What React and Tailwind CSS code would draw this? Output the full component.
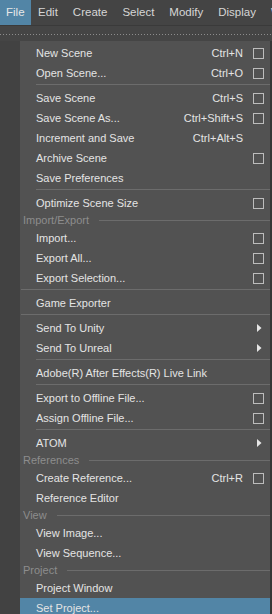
import React from 'react';

const menuBar = ['File', 'Edit', 'Create', 'Select', 'Modify', 'Display', 'Windows'];

// t: item | sep | label
const items = [
  { t: 'item', label: 'New Scene', key: 'Ctrl+N', box: true },
  { t: 'item', label: 'Open Scene...', key: 'Ctrl+O', box: true },
  { t: 'sep' },
  { t: 'item', label: 'Save Scene', key: 'Ctrl+S', box: true },
  { t: 'item', label: 'Save Scene As...', key: 'Ctrl+Shift+S', box: true },
  { t: 'item', label: 'Increment and Save', key: 'Ctrl+Alt+S' },
  { t: 'item', label: 'Archive Scene', box: true },
  { t: 'item', label: 'Save Preferences' },
  { t: 'sep' },
  { t: 'item', label: 'Optimize Scene Size', box: true },
  { t: 'label', label: 'Import/Export' },
  { t: 'item', label: 'Import...', box: true },
  { t: 'item', label: 'Export All...', box: true },
  { t: 'item', label: 'Export Selection...', box: true },
  { t: 'sep', full: true },
  { t: 'item', label: 'Game Exporter' },
  { t: 'sep', full: true },
  { t: 'item', label: 'Send To Unity', arrow: true },
  { t: 'item', label: 'Send To Unreal', arrow: true },
  { t: 'sep' },
  { t: 'item', label: 'Adobe(R) After Effects(R) Live Link' },
  { t: 'sep' },
  { t: 'item', label: 'Export to Offline File...', box: true },
  { t: 'item', label: 'Assign Offline File...', box: true },
  { t: 'sep' },
  { t: 'item', label: 'ATOM', arrow: true },
  { t: 'label', label: 'References' },
  { t: 'item', label: 'Create Reference...', key: 'Ctrl+R', box: true },
  { t: 'item', label: 'Reference Editor' },
  { t: 'label', label: 'View' },
  { t: 'item', label: 'View Image...' },
  { t: 'item', label: 'View Sequence...' },
  { t: 'label', label: 'Project' },
  { t: 'item', label: 'Project Window' },
  { t: 'item', label: 'Set Project...', active: true },
];

function Arrow() {
  return (
    <svg width="5" height="8" viewBox="0 0 5 8" className="ml-[14px]">
      <path d="M0 0 L4.5 4 L0 8 Z" fill="#e6e6e6" />
    </svg>
  );
}

function Row({ it }) {
  if (it.t === 'sep') {
    return (
      <div className={'h-[5px] pt-[1px] ' + (it.full ? 'pl-[1px]' : 'pl-[16px]')}>
        <div className="h-px bg-[#6c6c6c]" />
      </div>
    );
  }
  if (it.t === 'label') {
    return (
      <div className="h-[15px] flex items-center pl-[3px] text-[#8d8d8d]">
        <span className="leading-none">{it.label}</span>
        <div className="flex-1 h-px bg-[#6c6c6c] ml-[10px]" />
      </div>
    );
  }
  return (
    <div
      className={
        'h-[20px] flex items-center pl-[16px] text-[#e4e4e4] ' +
        (it.active ? 'bg-[#5285a6]' : '')
      }
    >
      <span className="flex-1 whitespace-nowrap">{it.label}</span>
      {it.key && <span className="whitespace-nowrap">{it.key}</span>}
      <div className="w-[27px] h-full flex items-center">
        {it.box && <div className="ml-[10px] w-[11px] h-[11px] border border-[#bcbcbc]" />}
        {it.arrow && <Arrow />}
      </div>
    </div>
  );
}

export default function App() {
  return (
    <div
      className="w-[272px] h-[614px] bg-[#424242] overflow-hidden flex flex-col text-[11px]"
      style={{ fontFamily: '"Liberation Sans", Arial, sans-serif' }}
    >
      <div className="h-[25px] bg-[#444444] flex items-stretch text-[11.5px] text-[#d6d6d6] shrink-0">
        {menuBar.map((m, i) => (
          <div
            key={m}
            className={
              'flex items-center whitespace-nowrap ' +
              (i === 0 ? 'bg-[#5285a6] text-[#e8e8e8] pl-[6px] pr-[6px]' : 'px-[7.5px]')
            }
          >
            {m}
          </div>
        ))}
      </div>
      <div className="h-px bg-[#3a3a3a] shrink-0" />
      <div className="h-[15px] bg-[#454545] shrink-0 flex items-center">
        <div className="w-full h-px mt-[1px] bg-[linear-gradient(to_right,#8c8c8c_1px,transparent_1px)] bg-[length:3px_1px]" />
      </div>
      <div className="flex-1 flex">
        <div className="w-[20px] bg-[#424242]" />
        <div className="w-[250px] bg-[#525252] pt-[2px]">
          {items.map((it, i) => (
            <Row key={i} it={it} />
          ))}
        </div>
        <div className="flex-1 bg-[#363636]" />
      </div>
    </div>
  );
}
